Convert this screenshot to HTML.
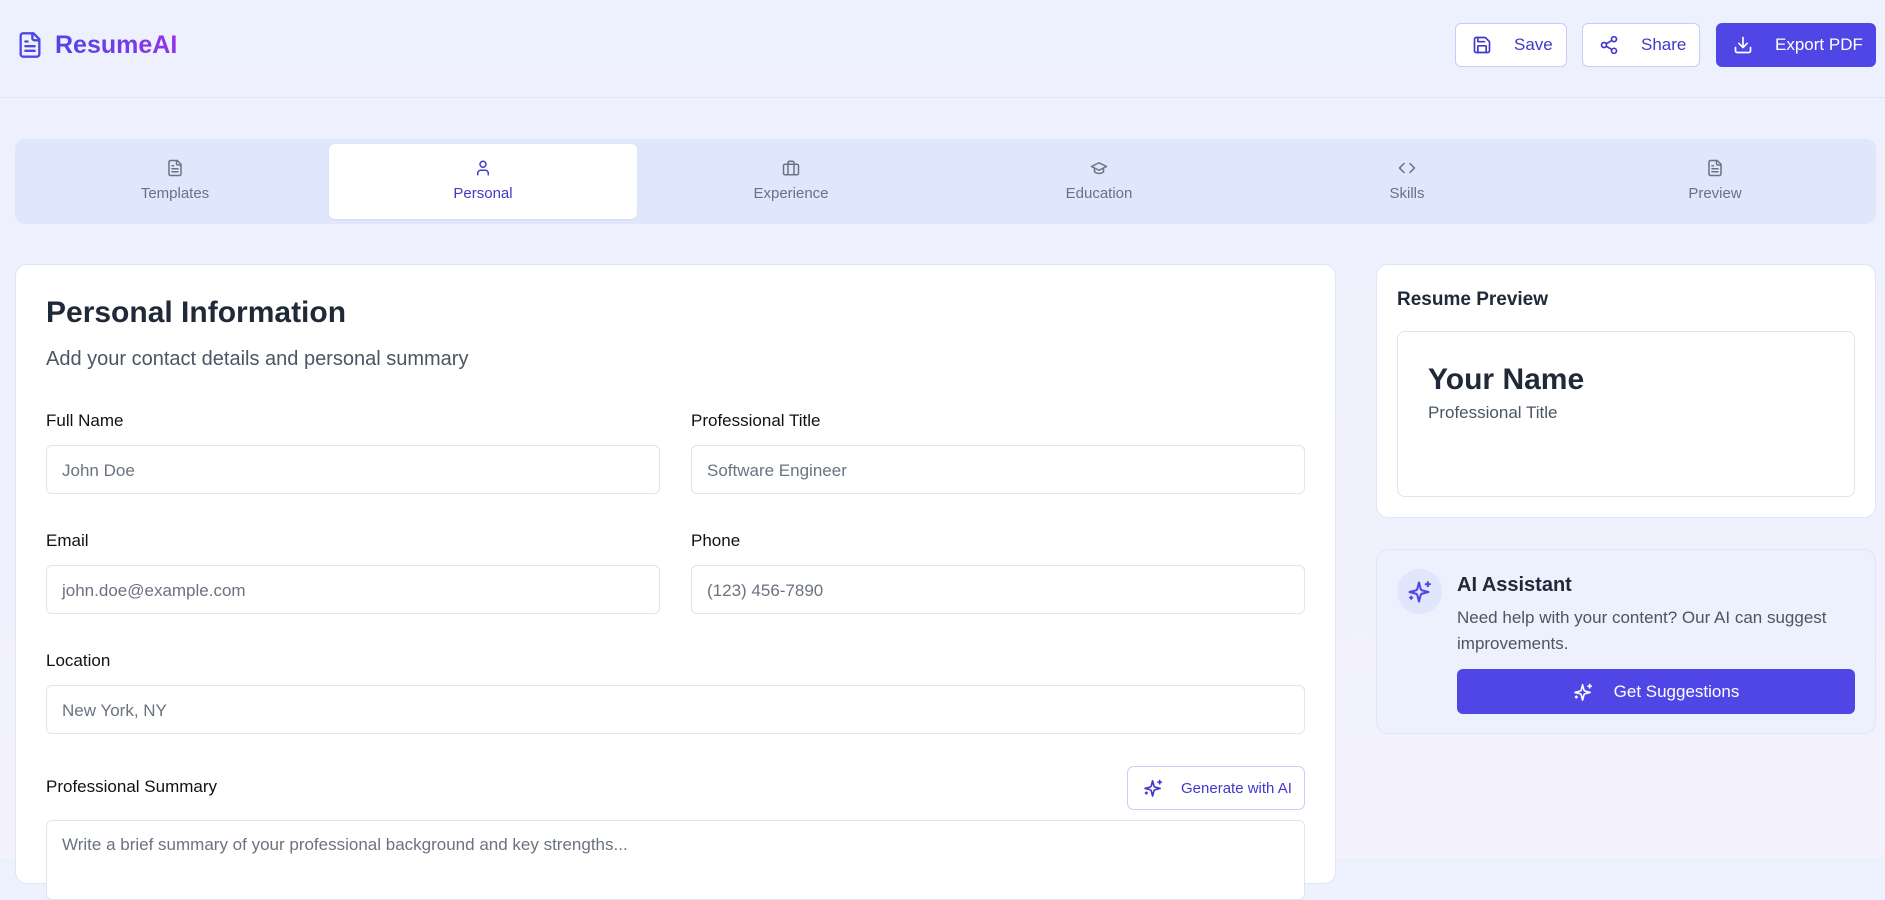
<!DOCTYPE html>
<html><head><meta charset="utf-8"><style>
*{box-sizing:border-box;margin:0;padding:0}
body{width:1885px;height:858px;overflow:hidden;font-family:"Liberation Sans",sans-serif;background:linear-gradient(180deg,#edf1fd 0%,#f0f1fd 60%,#f4f2fd 100%);position:relative}
.a{position:absolute}
.hdr{left:0;top:0;width:1885px;height:98px;border-bottom:1px solid #dfe5f8}
.logo{left:55px;top:31px;font-size:25px;font-weight:bold;background:linear-gradient(90deg,#4f46e5,#9333ea);-webkit-background-clip:text;color:transparent}
.btn{top:23px;height:44px;border:1px solid #c7cdf8;border-radius:6px;background:#fff;color:#4338ca;font-size:17px;display:flex;align-items:center;padding-left:16px}
.btn svg{margin-right:22px}
.tabs{left:15px;top:139px;width:1861px;height:85px;background:#e0e6fc;border-radius:10px}
.tab{top:0;width:308px;height:85px;text-align:center;color:#6b7280;font-size:15px}
.tab svg{position:absolute;left:145px;top:20px}
.tab span{position:absolute;left:0;right:0;top:46px}
.act{top:5px;left:314px;width:308px;height:75px;background:#fff;border-radius:6px;box-shadow:0 1px 2px rgba(0,0,0,.06)}
.card{background:#fff;border:1px solid #dfe4f8;border-radius:12px}
.lbl{font-size:17px;color:#111}
.inp{height:49px;border:1px solid #e2e4e8;border-radius:6px;background:#fff;font-size:17px;color:#6b7280;padding:15px 0 0 15px}
</style></head><body>
<div class="a hdr"></div>
<svg class="a" style="left:16px;top:30px" width="28" height="30" viewBox="0 0 24 24" fill="none" stroke="#4f46e5" stroke-width="2" stroke-linecap="round" stroke-linejoin="round"><path d="M15 2H6a2 2 0 0 0-2 2v16a2 2 0 0 0 2 2h12a2 2 0 0 0 2-2V7z"/><path d="M14 2v4a2 2 0 0 0 2 2h4"/><path d="M10 9H8M16 13H8M16 17H8"/></svg>
<div class="a logo">ResumeAI</div>
<div class="a btn" style="left:1455px;width:112px"><svg width="20" height="20" viewBox="0 0 24 24" fill="none" stroke="#4338ca" stroke-width="2" stroke-linecap="round" stroke-linejoin="round"><path d="M15.2 3a2 2 0 0 1 1.4.6l3.8 3.8a2 2 0 0 1 .6 1.4V19a2 2 0 0 1-2 2H5a2 2 0 0 1-2-2V5a2 2 0 0 1 2-2z"/><path d="M17 21v-7a1 1 0 0 0-1-1H8a1 1 0 0 0-1 1v7"/><path d="M7 3v4a1 1 0 0 0 1 1h7"/></svg>Save</div>
<div class="a btn" style="left:1582px;width:118px"><svg width="20" height="20" viewBox="0 0 24 24" fill="none" stroke="#4338ca" stroke-width="2" stroke-linecap="round" stroke-linejoin="round"><circle cx="18" cy="5" r="3"/><circle cx="6" cy="12" r="3"/><circle cx="18" cy="19" r="3"/><path d="M8.6 13.5l6.8 4M15.4 6.5l-6.8 4"/></svg>Share</div>
<div class="a btn" style="left:1716px;width:160px;background:#4f46e5;border-color:#4f46e5;color:#fff"><svg width="20" height="20" viewBox="0 0 24 24" fill="none" stroke="#fff" stroke-width="2" stroke-linecap="round" stroke-linejoin="round"><path d="M21 15v4a2 2 0 0 1-2 2H5a2 2 0 0 1-2-2v-4"/><path d="M7 10l5 5 5-5M12 15V3"/></svg>Export PDF</div>

<div class="a tabs">
<div class="a act"></div>
<div class="a tab" style="left:6px"><svg width="18" height="18" viewBox="0 0 24 24" fill="none" stroke="#6b7280" stroke-width="2" stroke-linecap="round" stroke-linejoin="round"><path d="M15 2H6a2 2 0 0 0-2 2v16a2 2 0 0 0 2 2h12a2 2 0 0 0 2-2V7z"/><path d="M14 2v4a2 2 0 0 0 2 2h4"/><path d="M10 9H8M16 13H8M16 17H8"/></svg><span>Templates</span></div>
<div class="a tab" style="left:314px;color:#4338ca"><svg width="18" height="18" viewBox="0 0 24 24" fill="none" stroke="#4338ca" stroke-width="2" stroke-linecap="round"><circle cx="12" cy="7" r="4"/><path d="M19 21v-2a4 4 0 0 0-4-4H9a4 4 0 0 0-4 4v2"/></svg><span>Personal</span></div>
<div class="a tab" style="left:622px"><svg width="18" height="18" viewBox="0 0 24 24" fill="none" stroke="#6b7280" stroke-width="2" stroke-linecap="round" stroke-linejoin="round"><rect x="2" y="7" width="20" height="14" rx="2"/><path d="M16 21V5a2 2 0 0 0-2-2h-4a2 2 0 0 0-2 2v16"/></svg><span>Experience</span></div>
<div class="a tab" style="left:930px"><svg width="18" height="18" viewBox="0 0 24 24" fill="none" stroke="#6b7280" stroke-width="2" stroke-linecap="round" stroke-linejoin="round"><path d="M22 10L12 5 2 10l10 5z"/><path d="M6 12v5c3 3 9 3 12 0v-5"/></svg><span>Education</span></div>
<div class="a tab" style="left:1238px"><svg width="18" height="18" viewBox="0 0 24 24" fill="none" stroke="#6b7280" stroke-width="2" stroke-linecap="round" stroke-linejoin="round"><path d="M16 18l6-6-6-6M8 6l-6 6 6 6"/></svg><span>Skills</span></div>
<div class="a tab" style="left:1546px"><svg width="18" height="18" viewBox="0 0 24 24" fill="none" stroke="#6b7280" stroke-width="2" stroke-linecap="round" stroke-linejoin="round"><path d="M15 2H6a2 2 0 0 0-2 2v16a2 2 0 0 0 2 2h12a2 2 0 0 0 2-2V7z"/><path d="M14 2v4a2 2 0 0 0 2 2h4"/><path d="M10 9H8M16 13H8M16 17H8"/></svg><span>Preview</span></div>
</div>

<div class="a card" style="left:15px;top:264px;width:1321px;height:620px"></div>
<div class="a" style="left:46px;top:296px;font-size:30px;font-weight:bold;color:#1f2937">Personal Information</div>
<div class="a" style="left:46px;top:348px;font-size:20px;color:#4b5563">Add your contact details and personal summary</div>
<div class="a lbl" style="left:46px;top:411px">Full Name</div>
<div class="a lbl" style="left:691px;top:411px">Professional Title</div>
<div class="a inp" style="left:46px;top:445px;width:614px">John Doe</div>
<div class="a inp" style="left:691px;top:445px;width:614px">Software Engineer</div>
<div class="a lbl" style="left:46px;top:531px">Email</div>
<div class="a lbl" style="left:691px;top:531px">Phone</div>
<div class="a inp" style="left:46px;top:565px;width:614px">john.doe@example.com</div>
<div class="a inp" style="left:691px;top:565px;width:614px">(123) 456-7890</div>
<div class="a lbl" style="left:46px;top:651px">Location</div>
<div class="a inp" style="left:46px;top:685px;width:1259px">New York, NY</div>
<div class="a lbl" style="left:46px;top:777px">Professional Summary</div>
<div class="a" style="left:1127px;top:766px;width:178px;height:44px;border:1px solid #c7cdf8;border-radius:7px;background:#fff;color:#4338ca;font-size:15px;display:flex;align-items:center;padding-left:15px"><svg width="20" height="20" viewBox="0 0 24 24" fill="none" stroke="#4338ca" stroke-width="2" stroke-linecap="round" stroke-linejoin="round" style="margin-right:18px"><path d="M9.9 15.5a2 2 0 0 0-1.4-1.4L2.4 12.5l6.1-1.6a2 2 0 0 0 1.4-1.4L11.5 3.4l1.6 6.1a2 2 0 0 0 1.4 1.4l6.1 1.6-6.1 1.6a2 2 0 0 0-1.4 1.4l-1.6 6.1z"/><path d="M20 3v4M22 5h-4M4 17v2M5 18H3"/></svg>Generate with AI</div>
<div class="a inp" style="left:46px;top:820px;width:1259px;height:80px;padding-top:14px">Write a brief summary of your professional background and key strengths...</div>

<div class="a card" style="left:1376px;top:264px;width:500px;height:254px"></div>
<div class="a" style="left:1397px;top:289px;font-size:19px;font-weight:bold;color:#1f2937">Resume Preview</div>
<div class="a" style="left:1397px;top:331px;width:458px;height:166px;border:1px solid #e2e4e8;border-radius:8px;background:#fff"></div>
<div class="a" style="left:1428px;top:363px;font-size:30px;font-weight:bold;color:#1f2937">Your Name</div>
<div class="a" style="left:1428px;top:403px;font-size:17px;color:#4b5563">Professional Title</div>

<div class="a" style="left:1376px;top:549px;width:500px;height:185px;background:#edf0fd;border:1px solid #dfe4f8;border-radius:12px"></div>
<div class="a" style="left:1397px;top:569px;width:45px;height:45px;border-radius:50%;background:#e0e6fc"></div>
<svg class="a" style="left:1407px;top:579px" width="25" height="25" viewBox="0 0 24 24" fill="none" stroke="#4f46e5" stroke-width="2" stroke-linecap="round" stroke-linejoin="round"><path d="M9.9 15.5a2 2 0 0 0-1.4-1.4L2.4 12.5l6.1-1.6a2 2 0 0 0 1.4-1.4L11.5 3.4l1.6 6.1a2 2 0 0 0 1.4 1.4l6.1 1.6-6.1 1.6a2 2 0 0 0-1.4 1.4l-1.6 6.1z"/><path d="M20 3v4M22 5h-4M4 17v2M5 18H3"/></svg>
<div class="a" style="left:1457px;top:574px;font-size:20px;font-weight:bold;color:#1f2937">AI Assistant</div>
<div class="a" style="left:1457px;top:605px;width:400px;font-size:17px;line-height:26px;color:#4b5563">Need help with your content? Our AI can suggest improvements.</div>
<div class="a" style="left:1457px;top:669px;width:398px;height:45px;background:#4f46e5;border-radius:6px;color:#fff;font-size:17px;display:flex;align-items:center;justify-content:center"><svg width="20" height="20" viewBox="0 0 24 24" fill="none" stroke="#fff" stroke-width="2" stroke-linecap="round" stroke-linejoin="round" style="margin-right:21px"><path d="M9.9 15.5a2 2 0 0 0-1.4-1.4L2.4 12.5l6.1-1.6a2 2 0 0 0 1.4-1.4L11.5 3.4l1.6 6.1a2 2 0 0 0 1.4 1.4l6.1 1.6-6.1 1.6a2 2 0 0 0-1.4 1.4l-1.6 6.1z"/><path d="M20 3v4M22 5h-4M4 17v2M5 18H3"/></svg>Get Suggestions</div>
</body></html>
